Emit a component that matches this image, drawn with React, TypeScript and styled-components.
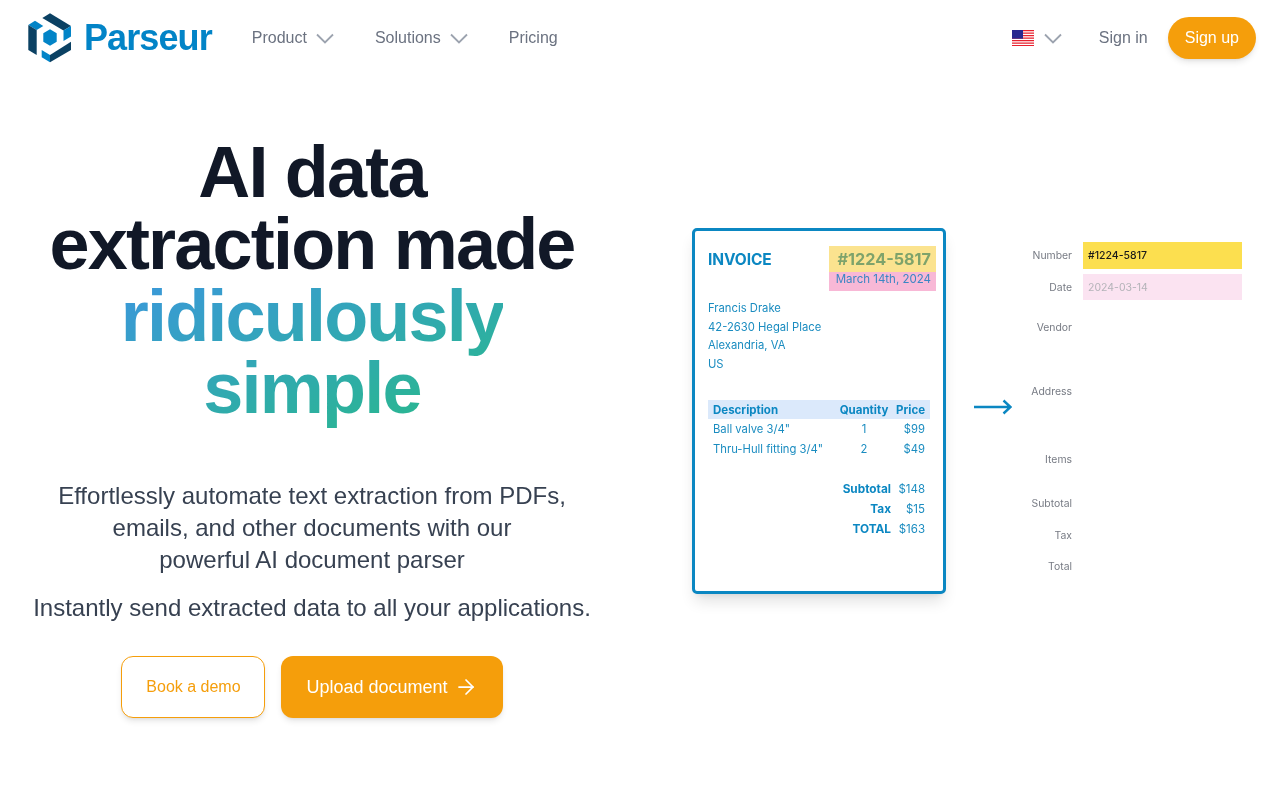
import { ArrowRight } from 'lucide-react'
import styled, { createGlobalStyle } from 'styled-components'

const NAV_LINKS = [
  { label: 'Product', menu: true },
  { label: 'Solutions', menu: true },
  { label: 'Pricing', menu: false },
]

const LINE_ITEMS = [
  { name: 'Ball valve 3/4"', qty: '1', price: '$99' },
  { name: 'Thru-Hull fitting 3/4"', qty: '2', price: '$49' },
]

const TOTALS = [
  { label: 'Subtotal', value: '$148' },
  { label: 'Tax', value: '$15' },
  { label: 'TOTAL', value: '$163' },
]

const FIELDS = [
  { label: 'Number', height: 27, value: '#1224-5817', tone: 'number' },
  { label: 'Date', height: 26, value: '2024-03-14', tone: 'date' },
  { label: 'Vendor', height: 44 },
  { label: 'Address', height: 74 },
  { label: 'Items', height: 52 },
  { label: 'Subtotal', height: 27 },
  { label: 'Tax', height: 27 },
  { label: 'Total', height: 25 },
]

const GlobalStyle = createGlobalStyle`
  html, body {
    margin: 0;
    background: #ffffff;
  }
  body {
    font-family: 'Liberation Sans', Arial, sans-serif;
    -webkit-font-smoothing: antialiased;
    overflow: hidden;
  }
`

const Page = styled.div`
  width: 1280px;
  height: 800px;
  box-sizing: border-box;
  will-change: transform;
`

const Header = styled.header`
  display: flex;
  align-items: center;
  height: 76px;
  padding: 0 24px 0 28px;
`

const Brand = styled.a`
  display: flex;
  align-items: center;
  gap: 12px;
  text-decoration: none;
`

const Wordmark = styled.span`
  font-size: 36px;
  font-weight: 700;
  letter-spacing: -0.9px;
  color: #0284c7;
`

const MainNav = styled.nav`
  display: flex;
  align-items: center;
  gap: 41px;
  margin-left: 40px;
`

const NavItem = styled.a`
  display: flex;
  align-items: center;
  gap: 9px;
  font-size: 16px;
  color: #6b7280;
  text-decoration: none;
`

const RightNav = styled.div`
  display: flex;
  align-items: center;
  margin-left: auto;
`

const LangButton = styled.button`
  display: flex;
  align-items: center;
  gap: 10px;
  padding: 0;
  background: none;
  border: none;
`

const SignIn = styled(NavItem)`
  margin-left: 37px;
`

const SignUp = styled.a`
  display: flex;
  align-items: center;
  height: 42px;
  margin-left: 20px;
  padding: 0 17px;
  border-radius: 21px;
  background: #f59e0b;
  color: #ffffff;
  font-size: 16px;
  box-shadow: 0 4px 6px -1px rgba(0, 0, 0, 0.1), 0 2px 4px -2px rgba(0, 0, 0, 0.1);
`

const Hero = styled.main`
  display: grid;
  grid-template-columns: 624px 1fr;
  padding-top: 60px;
`

const Pitch = styled.section`
  display: flex;
  flex-direction: column;
  align-items: center;
  text-align: center;
`

const Title = styled.h1`
  margin: 0;
  font-size: 72px;
  line-height: 72px;
  font-weight: 700;
  letter-spacing: -1.8px;
  color: #111827;
`

// extra bottom padding so the clipped gradient reaches the descender of the p
const GradientText = styled.span`
  display: inline-block;
  padding-bottom: 8px;
  background: linear-gradient(to bottom right, #3b97dc, #27bb85);
  -webkit-background-clip: text;
  background-clip: text;
  color: transparent;
`

const Lead = styled.p`
  margin: 48px 0 0;
  font-size: 24px;
  line-height: 32px;
  color: #374151;
`

const SubLead = styled(Lead)`
  margin-top: 16px;
`

const Actions = styled.div`
  display: flex;
  gap: 16px;
  margin-top: 32px;
`

const DemoButton = styled.a`
  display: flex;
  align-items: center;
  justify-content: center;
  width: 144px;
  height: 62px;
  box-sizing: border-box;
  border: 1px solid #f59e0b;
  border-radius: 12px;
  background: #ffffff;
  color: #f59e0b;
  font-size: 16px;
  box-shadow: 0 4px 6px -1px rgba(0, 0, 0, 0.1), 0 2px 4px -2px rgba(0, 0, 0, 0.1);
`

const UploadButton = styled.a`
  display: flex;
  align-items: center;
  gap: 6px;
  height: 62px;
  padding: 0 25px;
  border-radius: 12px;
  background: #f59e0b;
  color: #ffffff;
  font-size: 18px;
  box-shadow: 0 4px 6px -1px rgba(0, 0, 0, 0.1), 0 2px 4px -2px rgba(0, 0, 0, 0.1);
`

const Illustration = styled.section`
  display: flex;
  align-items: flex-start;
  padding: 92px 0 0 68px;
  font-family: Inter, 'Liberation Sans', sans-serif;
  filter: blur(0.4px);
`

const Invoice = styled.div`
  box-sizing: border-box;
  width: 254px;
  height: 366px;
  padding: 15px 13px;
  border: 3px solid #0b87c2;
  border-radius: 5px;
  background: #ffffff;
  color: #1a8cc0;
  font-size: 11.25px;
  box-shadow: 0 10px 15px -3px rgba(0, 0, 0, 0.12), 0 4px 6px -4px rgba(0, 0, 0, 0.1);
`

const InvoiceTop = styled.div`
  display: flex;
  justify-content: space-between;
  margin-right: -6px;
`

const InvoiceTitle = styled.div`
  height: 26px;
  line-height: 28px;
  font-size: 15.5px;
  font-weight: 700;
  letter-spacing: -0.1px;
  color: #0b87c2;
`

const Highlights = styled.div`
  width: 107px;
`

const NumberMark = styled.div`
  height: 26px;
  line-height: 27px;
  padding-right: 5px;
  text-align: right;
  background: #fbe38f;
  color: #7ea36b;
  font-size: 16.2px;
  font-weight: 700;
`

const DateMark = styled.div`
  height: 19px;
  line-height: 15px;
  padding-right: 5px;
  text-align: right;
  background: #f8b8d6;
  color: #3a86c4;
  font-size: 11.5px;
`

const Address = styled.div`
  margin-top: 8px;
  line-height: 18.6px;
`

const ItemRow = styled.div<{ $head?: boolean }>`
  display: grid;
  grid-template-columns: 126px 50px 36px;
  align-items: center;
  height: ${(p) => (p.$head ? 19 : 20)}px;
  padding: 0 5px;
  background: ${(p) => (p.$head ? '#dbe9fb' : 'transparent')};
  font-size: ${(p) => (p.$head ? '11.5px' : 'inherit')};
  font-weight: ${(p) => (p.$head ? 700 : 400)};
  color: ${(p) => (p.$head ? '#0b87c2' : 'inherit')};
`

const ItemTable = styled.div`
  margin-top: 27px;
`

const Qty = styled.span`
  text-align: center;
  white-space: nowrap;
`

const Price = styled.span`
  text-align: right;
`

const TotalsBlock = styled.div`
  margin-top: 20px;
  padding-right: 5px;
`

const TotalRow = styled.div`
  display: flex;
  align-items: center;
  justify-content: flex-end;
  height: 20px;
`

const TotalLabel = styled.span`
  font-size: 11.8px;
  font-weight: 700;
  color: #0b87c2;
`

const TotalValue = styled.span`
  width: 34px;
  font-size: 11.5px;
  text-align: right;
`

const FlowArrow = styled.svg`
  flex: none;
  margin: 171px 10px 0 28px;
`

const Extracted = styled.div`
  display: flex;
  flex-direction: column;
  gap: 5px;
  margin-top: 14px;
`

const FieldRow = styled.div<{ $height: number }>`
  display: grid;
  grid-template-columns: 50px 159px;
  align-items: center;
  column-gap: 11px;
  height: ${(p) => p.$height}px;
`

const FieldLabel = styled.span`
  font-size: 10.4px;
  text-align: right;
  color: #777b84;
`

const FieldValue = styled.span<{ $tone: string }>`
  display: flex;
  align-items: center;
  height: 100%;
  padding-left: 5px;
  font-size: 10.5px;
  font-weight: ${(p) => (p.$tone === 'number' ? 500 : 400)};
  background: ${(p) => (p.$tone === 'number' ? '#fcdf4f' : '#fbe3f1')};
  color: ${(p) => (p.$tone === 'number' ? '#1a1a1a' : '#b3b3b8')};
`

function ParseurLogo() {
  return (
    <svg width="44" height="50" viewBox="28 13 44 50">
      <path d="M42.3 18 L50 13.3 L71 26 L63.5 30.5 Z" fill="#0b4163" />
      <path d="M63.5 30.5 L71 26 L71 36.5 L63.5 41 Z" fill="#0284c7" />
      <path d="M28.3 25 L35 20.7 L43.3 26 L36.7 30 Z" fill="#0284c7" />
      <path d="M28.3 25 L36.7 30 L36.7 55 L28.3 50 Z" fill="#0b4163" />
      <path d="M50 29.3 L56.7 33.3 L56.7 41.7 L50 45.7 L43.3 41.7 L43.3 33.3 Z" fill="#0284c7" />
      <path d="M41.7 50 L50 55 L50 62.3 L41.7 57.3 Z" fill="#0284c7" />
      <path d="M50 55 L71 41.7 L71 50 L50 62.3 Z" fill="#0b4163" />
    </svg>
  )
}

function Chevron() {
  return (
    <svg width="18" height="11" viewBox="0 0 18 11" fill="none" stroke="#9ca3af" strokeWidth="1.8">
      <path d="M1 1.5L9 9.5L17 1.5" />
    </svg>
  )
}

function UsFlag() {
  const stripes = [0, 2.5, 5, 7.5, 10, 12.5, 15]
  return (
    <svg width="22" height="16" viewBox="0 0 22 16">
      <rect width="22" height="16" fill="#ffffff" />
      {stripes.map((y) => (
        <rect key={y} y={y} width="22" height="1.25" fill="#e8202e" />
      ))}
      <rect width="11" height="8.7" fill="#27288f" />
    </svg>
  )
}

export default function App() {
  return (
    <Page>
      <GlobalStyle />
      <Header>
        <Brand>
          <ParseurLogo />
          <Wordmark>Parseur</Wordmark>
        </Brand>
        <MainNav>
          {NAV_LINKS.map((link) => (
            <NavItem key={link.label}>
              {link.label}
              {link.menu && <Chevron />}
            </NavItem>
          ))}
        </MainNav>
        <RightNav>
          <LangButton aria-label="Language">
            <UsFlag />
            <Chevron />
          </LangButton>
          <SignIn>Sign in</SignIn>
          <SignUp>Sign up</SignUp>
        </RightNav>
      </Header>

      <Hero>
        <Pitch>
          <Title>
            AI data
            <br />
            extraction made
            <br />
            <GradientText>
              ridiculously
              <br />
              simple
            </GradientText>
          </Title>
          <Lead>
            Effortlessly automate text extraction from PDFs,
            <br />
            emails, and other documents with our
            <br />
            powerful AI document parser
          </Lead>
          <SubLead>Instantly send extracted data to all your applications.</SubLead>
          <Actions>
            <DemoButton>Book a demo</DemoButton>
            <UploadButton>
              Upload document
              <ArrowRight size={24} strokeWidth={1.75} />
            </UploadButton>
          </Actions>
        </Pitch>

        <Illustration>
          <Invoice>
            <InvoiceTop>
              <InvoiceTitle>INVOICE</InvoiceTitle>
              <Highlights>
                <NumberMark>#1224-5817</NumberMark>
                <DateMark>March 14th, 2024</DateMark>
              </Highlights>
            </InvoiceTop>
            <Address>
              Francis Drake
              <br />
              42-2630 Hegal Place
              <br />
              Alexandria, VA
              <br />
              US
            </Address>
            <ItemTable>
              <ItemRow $head>
                <span>Description</span>
                <Qty>Quantity</Qty>
                <Price>Price</Price>
              </ItemRow>
              {LINE_ITEMS.map((item) => (
                <ItemRow key={item.name}>
                  <span>{item.name}</span>
                  <Qty>{item.qty}</Qty>
                  <Price>{item.price}</Price>
                </ItemRow>
              ))}
            </ItemTable>
            <TotalsBlock>
              {TOTALS.map((row) => (
                <TotalRow key={row.label}>
                  <TotalLabel>{row.label}</TotalLabel>
                  <TotalValue>{row.value}</TotalValue>
                </TotalRow>
              ))}
            </TotalsBlock>
          </Invoice>

          <FlowArrow width="38" height="16" viewBox="0 0 38 16" fill="none" stroke="#0b87c2" strokeWidth="2.4">
            <path d="M0 8H36M29.5 1.5L36.5 8L29.5 14.5" />
          </FlowArrow>

          <Extracted>
            {FIELDS.map((field) => (
              <FieldRow key={field.label} $height={field.height}>
                <FieldLabel>{field.label}</FieldLabel>
                {field.value && <FieldValue $tone={field.tone!}>{field.value}</FieldValue>}
              </FieldRow>
            ))}
          </Extracted>
        </Illustration>
      </Hero>
    </Page>
  )
}
